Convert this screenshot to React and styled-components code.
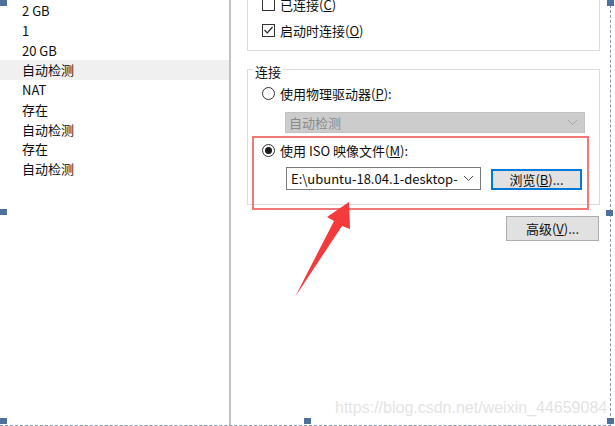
import styled, { createGlobalStyle } from "styled-components";

const GlobalStyle = createGlobalStyle`
  html, body {
    margin: 0;
    padding: 0;
    background: #ffffff;
  }
`;

const Page = styled.div`
  position: relative;
  width: 615px;
  height: 426px;
  overflow: hidden;
  display: grid;
  grid-template-columns: 229px 2px 1fr;
  background: #ffffff;
  font-family: "Noto Sans CJK SC", "Noto Sans", sans-serif;
  font-size: 13px;
  color: #0e0e0e;
`;

const List = styled.div`
  margin-top: 1px;
  display: flex;
  flex-direction: column;
`;

const ListRow = styled.div`
  height: 19.75px;
  line-height: 19.75px;
  padding-left: 22px;
  background: ${({ $selected }) => ($selected ? "#f0f0f0" : "transparent")};
`;

const Divider = styled.div`
  background: #bfc0c8;
`;

const Settings = styled.div`
  display: flex;
  flex-direction: column;
  padding: 0 15px 0 16px;
`;

const StatusGroup = styled.div`
  margin-top: -40px;
  border: 1px solid #dcdcdc;
  padding: 33px 14px 10px;
  display: flex;
  flex-direction: column;
  gap: 6px;
`;

const OptionRow = styled.label`
  height: 20px;
  display: flex;
  align-items: center;
  gap: 5px;
  margin-top: ${({ $gap }) => $gap || 0}px;
  white-space: nowrap;
`;

const CheckBox = styled.span`
  width: 11px;
  height: 11px;
  border: 1px solid #333333;
  background: #ffffff;
  display: flex;
  align-items: center;
  justify-content: center;
  flex: none;
`;

const Radio = styled.span`
  width: 11px;
  height: 11px;
  border: 1px solid #333333;
  border-radius: 50%;
  background: #ffffff;
  display: flex;
  align-items: center;
  justify-content: center;
  flex: none;

  &::after {
    content: "";
    width: 7px;
    height: 7px;
    border-radius: 50%;
    background: ${({ $checked }) => ($checked ? "#1a1a1a" : "transparent")};
  }
`;

const ConnectGroup = styled.fieldset`
  margin: 8px 0 0;
  border: 1px solid #dcdcdc;
  padding: 0 14px 14px;
  display: flex;
  flex-direction: column;
  min-width: 0;
`;

const Legend = styled.legend`
  padding: 6px 2px 0;
  margin-left: -9px;
  line-height: 14px;
`;

const DisabledSelect = styled.div`
  margin: 9px 0 0 23px;
  height: 21px;
  box-sizing: border-box;
  border: 1px solid #c2c2c2;
  background: #cccccc;
  color: #8a8a8a;
  display: flex;
  align-items: center;
  justify-content: space-between;
  padding: 0 6px 0 3px;
`;

const FileRow = styled.div`
  margin: 7px 0 0 24px;
  display: flex;
  align-items: flex-end;
  gap: 10px;
`;

const Combo = styled.div`
  width: 195px;
  height: 23px;
  box-sizing: border-box;
  border: 1px solid #7a7a7a;
  background: #ffffff;
  display: flex;
  align-items: center;
  justify-content: space-between;
  padding: 0 6px 0 4px;
  white-space: nowrap;
`;

const Button = styled.button`
  font: inherit;
  color: #0e0e0e;
  width: ${({ $width }) => $width}px;
  height: ${({ $height }) => $height}px;
  box-sizing: border-box;
  padding: 0;
  background: #e1e1e1;
  border: 1px solid ${({ $focused }) => ($focused ? "#0078d7" : "#adadad")};
  box-shadow: ${({ $focused }) => ($focused ? "inset 0 0 0 1px #0078d7" : "none")};
  display: flex;
  align-items: center;
  justify-content: center;
`;

const ButtonRow = styled.div`
  margin-top: 11px;
  display: flex;
  justify-content: flex-end;
  padding-right: 1px;
`;

const RedBox = styled.div`
  position: absolute;
  left: 252px;
  top: 136px;
  width: 337px;
  height: 74px;
  box-sizing: border-box;
  border: 2px solid #f27878;
  pointer-events: none;
`;

const Overlay = styled.svg`
  position: absolute;
  left: 0;
  top: 0;
  pointer-events: none;
`;

const Watermark = styled.div`
  position: absolute;
  left: 335px;
  top: 399px;
  font-family: "Liberation Sans", Arial, sans-serif;
  font-size: 16px;
  color: #e4e4e4;
  white-space: nowrap;
`;

const Handle = styled.div`
  position: absolute;
  left: ${({ $x }) => $x}px;
  top: ${({ $y }) => $y}px;
  width: 7px;
  height: 6px;
  background: #4f6f9c;
`;

const DashV = styled.div`
  position: absolute;
  left: 610px;
  top: 0;
  height: 426px;
  border-left: 1px dashed #8797b8;
`;

const DashH = styled.div`
  position: absolute;
  left: 0;
  top: 425px;
  width: 611px;
  border-top: 1px dashed #8797b8;
`;

const Chevron = ({ color }) => (
  <svg width="11" height="7" viewBox="0 0 11 7">
    <path d="M1 1 L5.5 5.5 L10 1" fill="none" stroke={color} strokeWidth="1" />
  </svg>
);

const items = ["2 GB", "1", "20 GB", "自动检测", "NAT", "存在", "自动检测", "存在", "自动检测"];

const handles = [
  [0, 0], [0, 209], [0, 418], [304, 418], [607, 418], [607, 0], [606, 210],
];

export default function App() {
  return (
    <>
      <GlobalStyle />
      <Page>
        <List>
          {items.map((text, i) => (
            <ListRow key={i} $selected={i === 3}>{text}</ListRow>
          ))}
        </List>
        <Divider />
        <Settings>
          <StatusGroup>
            <OptionRow>
              <CheckBox />
              <span>已连接(<u>C</u>)</span>
            </OptionRow>
            <OptionRow>
              <CheckBox>
                <svg width="9" height="8" viewBox="0 0 9 8">
                  <path d="M0.5 4 L3.3 6.8 L8.5 1" fill="none" stroke="#222" strokeWidth="1.2" />
                </svg>
              </CheckBox>
              <span>启动时连接(<u>O</u>)</span>
            </OptionRow>
          </StatusGroup>

          <ConnectGroup>
            <Legend>连接</Legend>
            <OptionRow $gap={4}>
              <Radio />
              <span>使用物理驱动器(<u>P</u>):</span>
            </OptionRow>
            <DisabledSelect>
              <span>自动检测</span>
              <Chevron color="#a6a6a6" />
            </DisabledSelect>
            <OptionRow $gap={7}>
              <Radio $checked />
              <span>使用 ISO 映像文件(<u>M</u>):</span>
            </OptionRow>
            <FileRow>
              <Combo>
                <span>E:\ubuntu-18.04.1-desktop-</span>
                <Chevron color="#555" />
              </Combo>
              <Button $width={91} $height={21} $focused>
                <span>浏览(<u>B</u>)...</span>
              </Button>
            </FileRow>
          </ConnectGroup>

          <ButtonRow>
            <Button $width={93} $height={25}>
              <span>高级(<u>V</u>)...</span>
            </Button>
          </ButtonRow>
        </Settings>

        <RedBox />
        <Overlay width="615" height="426" viewBox="0 0 615 426">
          <polygon
            points="349,202 327,217 334,221 295,297 342,226 350,229"
            fill="#f43a3a"
          />
        </Overlay>
        <Watermark>https://blog.csdn.net/weixin_44659084</Watermark>
        <DashV />
        <DashH />
        {handles.map(([x, y], i) => (
          <Handle key={i} $x={x} $y={y} />
        ))}
      </Page>
    </>
  );
}
